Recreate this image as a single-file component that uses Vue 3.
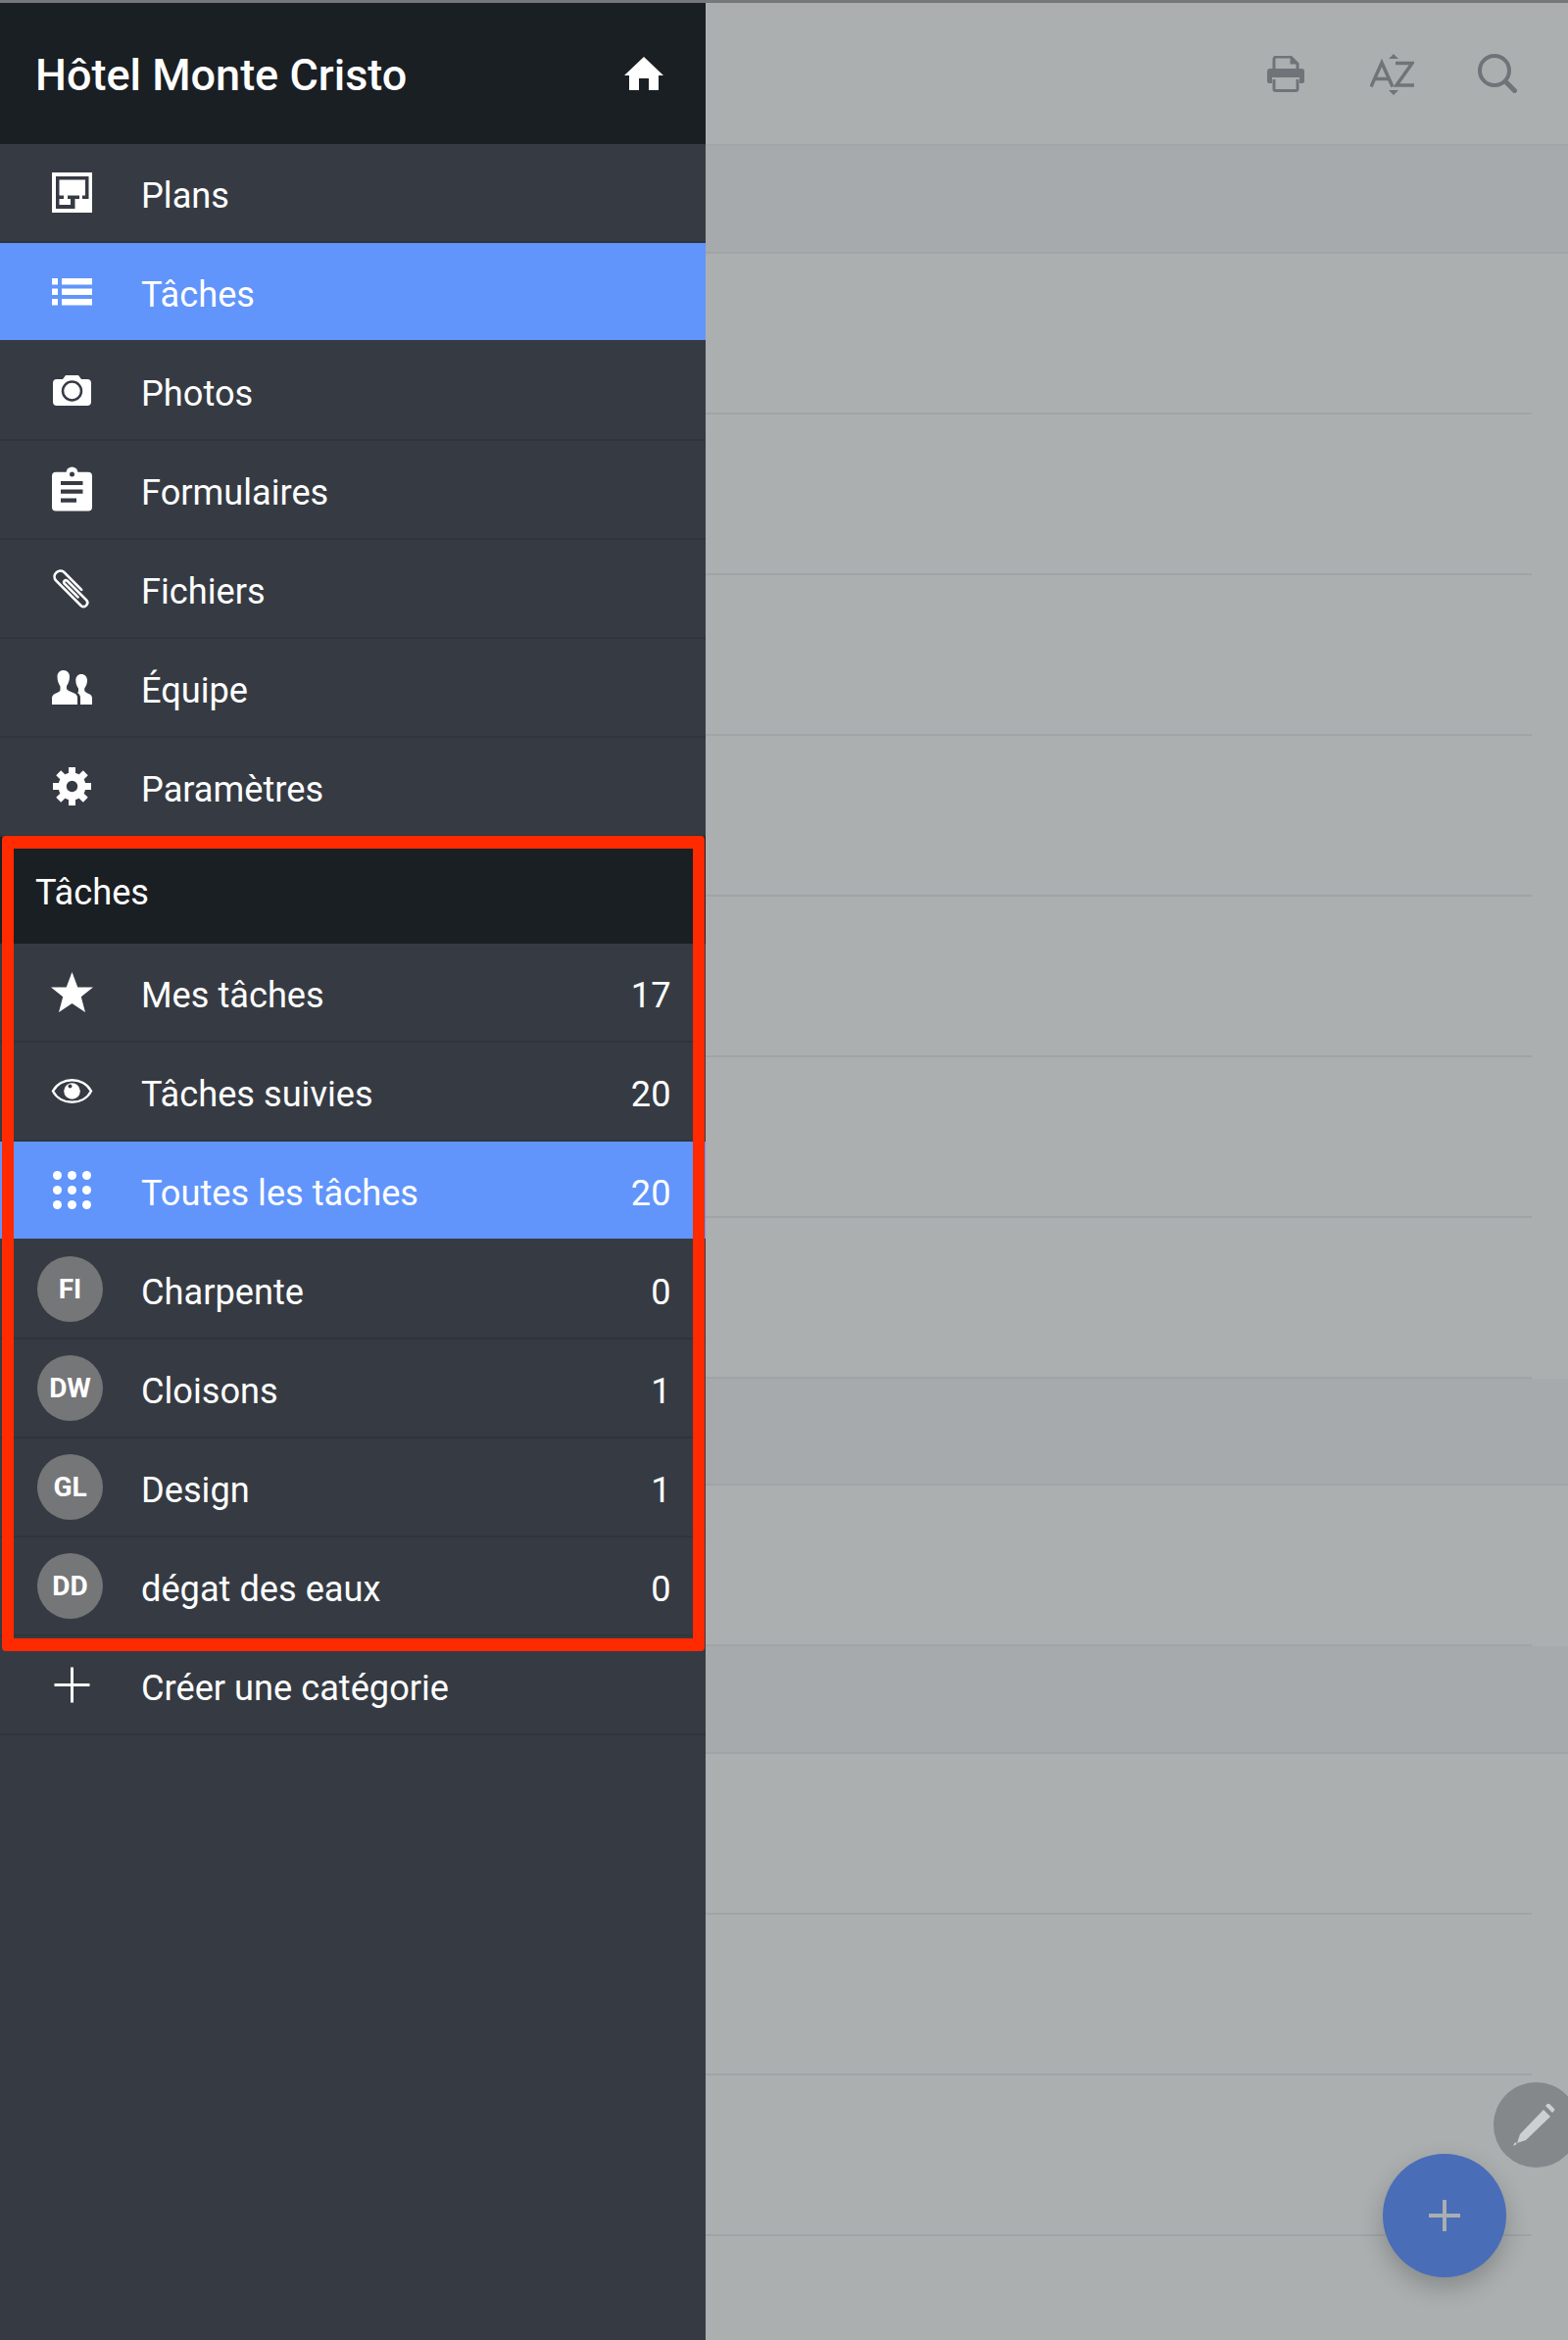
<template>
  <div class="screen">
    <aside class="sidebar">
      <header class="side-head">
        <h1>Hôtel Monte Cristo</h1>
        <svg class="home" viewBox="0 0 40 34"><path d="M20 0 L40 19 H35 V34 H25 V22 H15 V34 H5 V19 H0 Z" fill="#fff" /></svg>
      </header>

      <div v-for="item in menu" :key="item.label" class="row menu-row" :class="{ active: item.active }">
        <span class="ico">
          <svg viewBox="0 0 41 41" v-html="icons[item.icon]"></svg>
        </span>
        <span class="label">{{ item.label }}</span>
      </div>

      <div class="section-head">Tâches</div>

      <div v-for="item in categories" :key="item.label" class="row" :class="{ active: item.active }">
        <span v-if="item.icon" class="ico">
          <svg viewBox="0 0 41 41" v-html="icons[item.icon]"></svg>
        </span>
        <span v-else class="ico">
          <span class="avatar">{{ item.code }}</span>
        </span>
        <span class="label">{{ item.label }}</span>
        <span class="count">{{ item.count }}</span>
      </div>

      <div class="row">
        <span class="ico">
          <svg viewBox="0 0 41 41"><path d="M20.5 2.500v36M2.500 20.500h36" stroke="#fff" stroke-width="3" fill="none" /></svg>
        </span>
        <span class="label">Créer une catégorie</span>
      </div>
    </aside>

    <main class="content">
      <div class="toolbar">
        <svg class="tool print" viewBox="0 0 38 37">
          <path d="M7 13V3.500a2.500 2.500 0 0 1 2.500-2.500H24l7 7V13" fill="none" stroke="#6f7479" stroke-width="3" />
          <path d="M23.500 1v7.500H31z" fill="#6f7479" />
          <path d="M3 13h32a3 3 0 0 1 3 3v10a2 2 0 0 1-2 2h-3v-6H5v6H2a2 2 0 0 1-2-2V16a3 3 0 0 1 3-3z" fill="#6f7479" />
          <path d="M7 24v10a1.500 1.500 0 0 0 1.500 1.500h21A1.500 1.500 0 0 0 31 34V24" fill="none" stroke="#6f7479" stroke-width="3" />
        </svg>
        <svg class="tool az" viewBox="0 0 45 43">
          <path d="M1 34.500 12 10l11 24.500M5 26.500h14" fill="none" stroke="#6f7479" stroke-width="3.500" />
          <path d="M26 10.500h17L27 33h18" fill="none" stroke="#6f7479" stroke-width="3.500" />
          <path d="M19 6l5-5 5 5zM19 38l5 5 5-5z" fill="#6f7479" />
        </svg>
        <svg class="tool search" viewBox="0 0 40 40">
          <circle cx="17" cy="17" r="15" fill="none" stroke="#6f7479" stroke-width="4" />
          <path d="M28 28l9.500 9.500" stroke="#6f7479" stroke-width="5" stroke-linecap="round" />
        </svg>
      </div>

      <template v-for="(r, i) in rows" :key="i">
        <div v-if="r === 'band'" class="band"></div>
        <div v-else class="task"></div>
      </template>

      <button class="fab-edit">
        <svg viewBox="0 0 44 44"><path d="M32 6l7 7L14 37l-9 3 3-9zM34 2l1.500-1.500a2 2 0 0 1 3 0l4 4a2 2 0 0 1 0 3L41 9zM1 43l2-4 2 2z" fill="#cdd0d2" /></svg>
      </button>
      <button class="fab">
        <svg viewBox="0 0 32 32"><path d="M16 0v32M0 16h32" stroke="#a9aeb0" stroke-width="4" /></svg>
      </button>
    </main>

    <div class="highlight"></div>
  </div>
</template>

<script setup>
const dark = '#363b43'

const gearTeeth = [0, 45, 90, 135, 180, 225, 270, 315]
  .map(a => `<rect x="17" y="1" width="7" height="9" transform="rotate(${a} 20.5 20.5)"/>`)
  .join('')

const icons = {
  plans: `<path fill="#fff" d="M0 0h41v41H0z"/><path fill="${dark}" d="M4 4h33.500v23H31v-3.500h3V7.500H7.500v16H12V27H7.500v6H19v-6h-3v-3.500h12V27h-4.500v10H4z"/>`,
  list: '<path fill="#fff" d="M0 7h6v6.500H0zM10 7h31v6.500H10zM0 17.500h6V24H0zM10 17.500h31V24H10zM0 28h6v6.500H0zM10 28h31v6.500H10z"/>',
  camera: `<path fill="#fff" d="M5 9h6l3-4h13l3 4h6a4 4 0 0 1 4 4v19a4 4 0 0 1-4 4H5a4 4 0 0 1-4-4V13a4 4 0 0 1 4-4z"/><circle cx="20.500" cy="21" r="9.500" fill="none" stroke="${dark}" stroke-width="2.500"/>`,
  form: `<circle cx="20.500" cy="3.500" r="6" fill="#fff"/><rect x="0" y="2.800" width="41" height="39.700" rx="4" fill="#fff"/><circle cx="20.500" cy="5" r="2.500" fill="${dark}"/><path fill="${dark}" d="M9 12h22.500v4H9zM9 20.500h22.500v4.200H9zM9 29.500h16v4.200H9z"/>`,
  clip: '<path fill="none" stroke="#fff" stroke-width="2.600" stroke-linecap="round" d="M30.200 21.800 12.200 3.800A6 6 0 0 0 3.800 12.200L29.800 38.200A4 4 0 0 0 35.400 32.600L15.400 12.600A2 2 0 0 0 12.600 15.400L26.600 29.400"/>',
  team: '<path fill="#fff" d="M11.700 3c4 0 6.300 3 6.300 6.700 0 4-1.500 7-3 9.300v3c1 2 5 3 8 4.500 2 1 3 2.500 3 4.500V38H0v-6.500c0-2 1-3.500 3-4.500 3-1.500 6-2.500 5.500-4.500v-3C7 17 5.500 14 5.500 9.700 5.500 6 7.700 3 11.700 3z"/><path fill="#fff" d="M30 7c3.500 0 6 2.500 6 6.300 0 3.500-1.300 6.300-2.800 8.200v2.500c1 1.500 3.500 2.500 5 3.300 1.800 1 2.800 2.300 2.800 4.200V38H29v-7c0-2.500-1.500-4-3-5 1.500-1 1-2 1-3v-1.500c-1.500-2-2.700-4.700-2.700-8.200C24.300 9.500 26.500 7 30 7z"/>',
  gear: `<g fill="#fff"><circle cx="20.500" cy="20.500" r="14"/>${gearTeeth}</g><circle cx="20.500" cy="20.500" r="5.700" fill="${dark}"/>`,
  star: '<path fill="#fff" d="M20.500 0l5.800 15.500H42L29.800 25.300 34 41 20.500 32 7 41l4.200-15.700L-1 15.500h15.700z"/>',
  eye: `<path fill="none" stroke="#fff" stroke-width="2.400" d="M1 20.500C9 5.500 32 5.500 40 20.500 32 35.500 9 35.500 1 20.500z"/><circle cx="20.500" cy="20.500" r="8.300" fill="#fff"/><circle cx="18.500" cy="15.500" r="2" fill="${dark}"/>`,
  grid: '<g fill="#fff"><circle cx="5.500" cy="5.500" r="4.500"/><circle cx="20.500" cy="5.500" r="4.500"/><circle cx="35.500" cy="5.500" r="4.500"/><circle cx="5.500" cy="20.500" r="4.500"/><circle cx="20.500" cy="20.500" r="4.500"/><circle cx="35.500" cy="20.500" r="4.500"/><circle cx="5.500" cy="35.500" r="4.500"/><circle cx="20.500" cy="35.500" r="4.500"/><circle cx="35.500" cy="35.500" r="4.500"/></g>'
}

const menu = [
  { label: 'Plans', icon: 'plans' },
  { label: 'Tâches', icon: 'list', active: true },
  { label: 'Photos', icon: 'camera' },
  { label: 'Formulaires', icon: 'form' },
  { label: 'Fichiers', icon: 'clip' },
  { label: 'Équipe', icon: 'team' },
  { label: 'Paramètres', icon: 'gear' }
]

const categories = [
  { label: 'Mes tâches', icon: 'star', count: 17 },
  { label: 'Tâches suivies', icon: 'eye', count: 20 },
  { label: 'Toutes les tâches', icon: 'grid', count: 20, active: true },
  { label: 'Charpente', code: 'FI', count: 0 },
  { label: 'Cloisons', code: 'DW', count: 1 },
  { label: 'Design', code: 'GL', count: 1 },
  { label: 'dégat des eaux', code: 'DD', count: 0 }
]

const rows = ['band', 'task', 'task', 'task', 'task', 'task', 'task', 'task', 'band', 'task', 'band', 'task', 'task', 'task', 'task']
</script>

<style>
html, body { margin: 0; background: #abafb0; }
</style>

<style scoped>
.screen {
  position: relative;
  display: flex;
  width: 1600px;
  height: 2388px;
  overflow: hidden;
  box-sizing: border-box;
  border-top: 3px solid #757779;
  font-family: Roboto, "Liberation Sans", sans-serif;
}
.sidebar {
  flex: 0 0 720px;
  background: #363b43;
  color: #fff;
}
.side-head {
  display: flex;
  align-items: center;
  justify-content: space-between;
  height: 144px;
  padding: 0 43px 0 36px;
  background: #1a1f24;
}
.side-head h1 {
  margin: 0;
  padding-top: 2px;
  font-size: 45px;
  font-weight: 500;
}
.home { width: 40px; height: 34px; }
.row {
  display: flex;
  align-items: center;
  box-sizing: border-box;
  height: 101px;
  padding-right: 35.500px;
  border-bottom: 2px solid #30353c;
  font-size: 36.200px;
}
.row .label,
.row .count { padding-top: 6px; }
.menu-row .label { padding-top: 5px; }
.row.active {
  background: #6195fb;
  border-bottom-color: #363b43;
}
.ico {
  display: flex;
  align-items: center;
  justify-content: center;
  flex: 0 0 144px;
  padding-left: 2px;
  box-sizing: border-box;
}
.ico svg { width: 41px; height: 41px; overflow: visible; }
.avatar {
  display: flex;
  align-items: center;
  justify-content: center;
  width: 67px;
  height: 67px;
  margin-left: -3px;
  border-radius: 50%;
  background: #757678;
  font-size: 28px;
  font-weight: 700;
}
.label { flex: 1; }
.section-head {
  display: flex;
  align-items: center;
  box-sizing: border-box;
  height: 109px;
  padding: 4px 36px 0;
  background: #1a1f24;
  font-size: 36.200px;
}
.highlight {
  position: absolute;
  left: 2px;
  top: 850px;
  width: 717px;
  height: 832px;
  box-sizing: border-box;
  border: 12px solid #ff2a00;
  border-top-width: 13px;
  border-bottom-width: 13px;
  border-radius: 4px;
}
.content {
  position: relative;
  flex: 1;
  background: #abafb0;
}
.toolbar {
  display: flex;
  align-items: center;
  justify-content: flex-end;
  gap: 65px;
  height: 146px;
  padding-right: 52px;
  box-sizing: border-box;
  border-bottom: 2px solid #a2a6a8;
}
.tool.print { width: 38px; height: 37px; margin-right: 2px; }
.tool.az { width: 45px; height: 43px; }
.tool.search { width: 40px; height: 40px; }
.band {
  height: 109.500px;
  box-sizing: border-box;
  background: #a6aaad;
  border-bottom: 2px solid #a0a4a7;
}
.task {
  position: relative;
  height: 164px;
}
.task::after {
  content: "";
  position: absolute;
  left: 0;
  right: 37px;
  bottom: 0;
  height: 2px;
  background: #a0a4a6;
}
.fab,
.fab-edit {
  position: absolute;
  display: flex;
  align-items: center;
  justify-content: center;
  padding: 0;
  border: none;
  border-radius: 50%;
}
.fab {
  left: 691px;
  top: 2195px;
  width: 126px;
  height: 126px;
  background: #4a6db8;
  box-shadow: 0 10px 24px rgba(0, 0, 0, 0.22);
}
.fab svg { width: 32px; height: 32px; }
.fab-edit {
  left: 804px;
  top: 2122px;
  width: 87px;
  height: 87px;
  background: #85888a;
}
.fab-edit svg { width: 44px; height: 44px; margin-left: -6px; }
</style>
